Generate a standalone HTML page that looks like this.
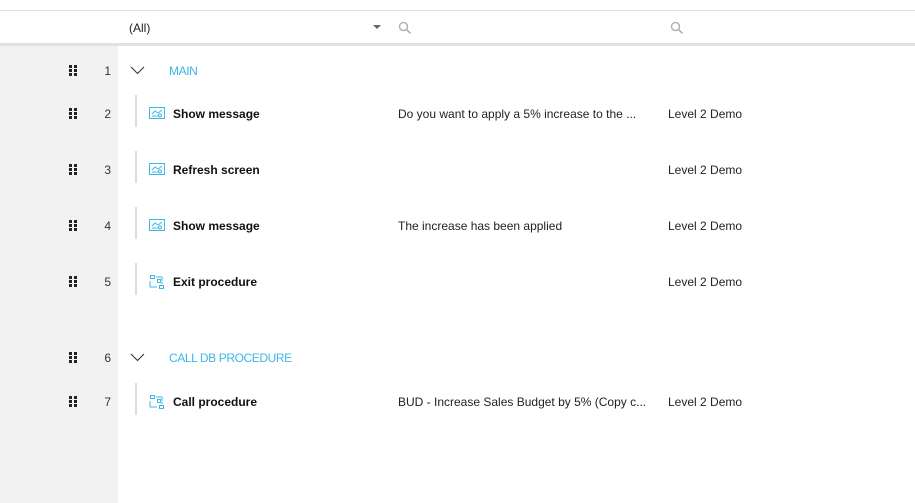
<!DOCTYPE html>
<html><head><style>
body{margin:0;width:915px;height:503px;background:#fff;font-family:"Liberation Sans",sans-serif;font-size:12px;color:#222;position:relative;overflow:hidden}
.a{position:absolute;white-space:nowrap}
.t{margin-top:1px}
.dots{position:absolute;left:69px;width:9px;height:11px}
.dots i{position:absolute;width:3px;height:3px;background:#222}
.num{position:absolute;left:96px;width:15px;text-align:right;color:#333;margin-top:1px}
.bar{position:absolute;left:135px;width:2px;height:32px;background:#ddd}
.b{font-weight:bold;color:#111}
.blue{color:#3cb8e6;letter-spacing:-0.4px}
</style></head><body>
<div class="a" style="left:0;top:10px;width:915px;height:1px;background:#e0e0e0"></div>
<div class="a" style="left:0;top:43px;width:915px;height:3px;background:#e2e2e2"></div>
<div class="a" style="left:0;top:46px;width:118px;height:457px;background:#f2f2f2"></div>
<div class="a t" style="left:129px;top:20px">(All)</div>
<svg class="a" style="left:373px;top:25px" width="9" height="5"><path d="M0 0H8L4 4Z" fill="#666"/></svg>
<svg class="a" style="left:398px;top:21px" width="14" height="14"><circle cx="5.5" cy="5.5" r="4" fill="none" stroke="#aaa" stroke-width="1.3"/><path d="M8.5 8.5L12.5 12.5" stroke="#aaa" stroke-width="1.5"/></svg>
<svg class="a" style="left:670px;top:21px" width="14" height="14"><circle cx="5.5" cy="5.5" r="4" fill="none" stroke="#aaa" stroke-width="1.3"/><path d="M8.5 8.5L12.5 12.5" stroke="#aaa" stroke-width="1.5"/></svg>

<div class="dots" style="top:65px"><i style="left:0;top:0"></i><i style="left:5px;top:0"></i><i style="left:0;top:4px"></i><i style="left:5px;top:4px"></i><i style="left:0;top:8px"></i><i style="left:5px;top:8px"></i></div>
<div class="num" style="top:63px">1</div>
<svg class="a" style="left:130px;top:66px" width="15" height="9"><path d="M1 1L7.5 7.5L14 1" fill="none" stroke="#333" stroke-width="1.1"/></svg>
<div class="a blue t" style="left:169px;top:63px">MAIN</div>

<div class="dots" style="top:108px"><i style="left:0;top:0"></i><i style="left:5px;top:0"></i><i style="left:0;top:4px"></i><i style="left:5px;top:4px"></i><i style="left:0;top:8px"></i><i style="left:5px;top:8px"></i></div>
<div class="num" style="top:106px">2</div>
<div class="bar" style="top:95px"></div>
<svg class="a" style="left:149px;top:107px" width="16" height="13"><rect x="0.5" y="0.5" width="15" height="11" fill="none" stroke="#3cb8e6"/><path d="M3 7L6 4L9 6L13 3M3 9H10" fill="none" stroke="#3cb8e6"/><circle cx="11" cy="8.5" r="1.5" fill="#fff" stroke="#3cb8e6"/></svg>
<div class="a b t" style="left:173px;top:106px">Show message</div>
<div class="a t" style="left:398px;top:106px">Do you want to apply a 5% increase to the ...</div>
<div class="a t" style="left:668px;top:106px">Level 2 Demo</div>

<div class="dots" style="top:164px"><i style="left:0;top:0"></i><i style="left:5px;top:0"></i><i style="left:0;top:4px"></i><i style="left:5px;top:4px"></i><i style="left:0;top:8px"></i><i style="left:5px;top:8px"></i></div>
<div class="num" style="top:162px">3</div>
<div class="bar" style="top:151px"></div>
<svg class="a" style="left:149px;top:163px" width="16" height="13"><rect x="0.5" y="0.5" width="15" height="11" fill="none" stroke="#3cb8e6"/><path d="M3 7L6 4L9 6L13 3M3 9H10" fill="none" stroke="#3cb8e6"/><circle cx="11" cy="8.5" r="1.5" fill="#fff" stroke="#3cb8e6"/></svg>
<div class="a b t" style="left:173px;top:162px">Refresh screen</div>
<div class="a t" style="left:668px;top:162px">Level 2 Demo</div>

<div class="dots" style="top:220px"><i style="left:0;top:0"></i><i style="left:5px;top:0"></i><i style="left:0;top:4px"></i><i style="left:5px;top:4px"></i><i style="left:0;top:8px"></i><i style="left:5px;top:8px"></i></div>
<div class="num" style="top:218px">4</div>
<div class="bar" style="top:207px"></div>
<svg class="a" style="left:149px;top:219px" width="16" height="13"><rect x="0.5" y="0.5" width="15" height="11" fill="none" stroke="#3cb8e6"/><path d="M3 7L6 4L9 6L13 3M3 9H10" fill="none" stroke="#3cb8e6"/><circle cx="11" cy="8.5" r="1.5" fill="#fff" stroke="#3cb8e6"/></svg>
<div class="a b t" style="left:173px;top:218px">Show message</div>
<div class="a t" style="left:398px;top:218px">The increase has been applied</div>
<div class="a t" style="left:668px;top:218px">Level 2 Demo</div>

<div class="dots" style="top:276px"><i style="left:0;top:0"></i><i style="left:5px;top:0"></i><i style="left:0;top:4px"></i><i style="left:5px;top:4px"></i><i style="left:0;top:8px"></i><i style="left:5px;top:8px"></i></div>
<div class="num" style="top:274px">5</div>
<div class="bar" style="top:263px"></div>
<svg class="a" style="left:149px;top:274px" width="16" height="16"><rect x="1.5" y="1.5" width="4" height="3" fill="none" stroke="#3cb8e6"/><rect x="10.5" y="11.5" width="4" height="3" fill="none" stroke="#3cb8e6"/><rect x="8.5" y="5.5" width="3" height="3" fill="none" stroke="#3cb8e6"/><path d="M7 3H13V7M1 7V13H8M13 8V10" fill="none" stroke="#3cb8e6"/></svg>
<div class="a b t" style="left:173px;top:274px">Exit procedure</div>
<div class="a t" style="left:668px;top:274px">Level 2 Demo</div>

<div class="dots" style="top:352px"><i style="left:0;top:0"></i><i style="left:5px;top:0"></i><i style="left:0;top:4px"></i><i style="left:5px;top:4px"></i><i style="left:0;top:8px"></i><i style="left:5px;top:8px"></i></div>
<div class="num" style="top:350px">6</div>
<svg class="a" style="left:130px;top:353px" width="15" height="9"><path d="M1 1L7.5 7.5L14 1" fill="none" stroke="#333" stroke-width="1.1"/></svg>
<div class="a blue t" style="left:169px;top:350px">CALL DB PROCEDURE</div>

<div class="dots" style="top:396px"><i style="left:0;top:0"></i><i style="left:5px;top:0"></i><i style="left:0;top:4px"></i><i style="left:5px;top:4px"></i><i style="left:0;top:8px"></i><i style="left:5px;top:8px"></i></div>
<div class="num" style="top:394px">7</div>
<div class="bar" style="top:383px"></div>
<svg class="a" style="left:149px;top:394px" width="16" height="16"><rect x="1.5" y="1.5" width="4" height="3" fill="none" stroke="#3cb8e6"/><rect x="10.5" y="11.5" width="4" height="3" fill="none" stroke="#3cb8e6"/><rect x="8.5" y="5.5" width="3" height="3" fill="none" stroke="#3cb8e6"/><path d="M7 3H13V7M1 7V13H8M13 8V10" fill="none" stroke="#3cb8e6"/></svg>
<div class="a b t" style="left:173px;top:394px">Call procedure</div>
<div class="a t" style="left:398px;top:394px">BUD - Increase Sales Budget by 5% (Copy c...</div>
<div class="a t" style="left:668px;top:394px">Level 2 Demo</div>
</body></html>
